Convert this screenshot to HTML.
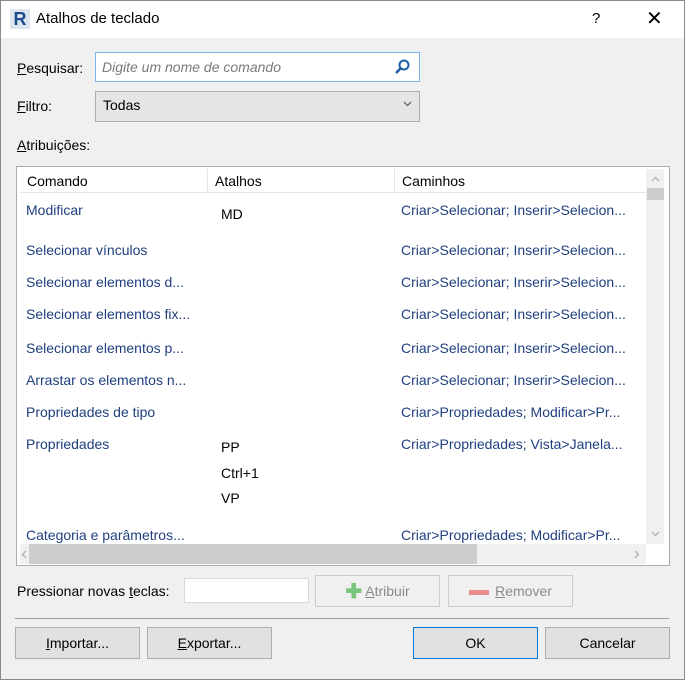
<!DOCTYPE html>
<html><head><meta charset="utf-8"><style>
*{margin:0;padding:0;box-sizing:border-box}
body{width:685px;height:680px;background:#f0f0f0;font-family:"Liberation Sans",sans-serif;font-size:14px;color:#000;position:relative;overflow:hidden}
.a{position:absolute;white-space:nowrap}
.b{color:#1f3f7f}
.btn{position:absolute;background:#e1e1e1;border:1px solid #adadad;text-align:center;line-height:30px}
u{text-decoration:underline}
</style></head><body>
<div class="a" style="left:0;top:0;width:685px;height:680px;border:1px solid #8a8a8a"></div>
<div class="a" style="left:1px;top:1px;width:683px;height:37px;background:#fff"></div>
<div class="a" style="left:10px;top:9px;width:20px;height:20px;background:#dde6ee;color:#1b4d8c;font-weight:bold;font-size:18px;line-height:20px;text-align:center">R</div>
<div class="a" style="left:36px;top:10px;font-size:15px">Atalhos de teclado</div>
<div class="a" style="left:592px;top:10px;font-size:15px">?</div>
<div class="a" style="left:646px;top:6px;font-size:20px">✕</div>

<div class="a" style="left:17px;top:60px"><u>P</u>esquisar:</div>
<div class="a" style="left:95px;top:52px;width:325px;height:30px;background:#fff;border:1px solid #7eb4ea"></div>
<div class="a" style="left:102px;top:59px;font-style:italic;color:#7a7a7a">Digite um nome de comando</div>
<svg class="a" style="left:394px;top:58px" width="18" height="18"><circle cx="10" cy="7" r="4.5" fill="none" stroke="#1a5fa8" stroke-width="2"/><line x1="7" y1="10" x2="2" y2="15" stroke="#1a5fa8" stroke-width="2.5"/></svg>

<div class="a" style="left:17px;top:98px"><u>F</u>iltro:</div>
<div class="a" style="left:95px;top:91px;width:325px;height:31px;background:#e5e5e5;border:1px solid #adadad"></div>
<div class="a" style="left:103px;top:97px">Todas</div>
<svg class="a" style="left:403px;top:101px" width="9" height="6"><polyline points="1,1 4.5,4.5 8,1" fill="none" stroke="#555" stroke-width="1.2"/></svg>

<div class="a" style="left:17px;top:137px"><u>A</u>tribuições:</div>

<div class="a" style="left:16px;top:166px;width:654px;height:400px;background:#fff;border:1px solid #adadad"></div>
<div class="a" style="left:20px;top:169px;width:626px;height:24px;border-bottom:1px solid #e5e5e5"></div>
<div class="a" style="left:207px;top:169px;width:1px;height:24px;background:#e5e5e5"></div>
<div class="a" style="left:394px;top:169px;width:1px;height:24px;background:#e5e5e5"></div>
<div class="a" style="left:27px;top:173px">Comando</div>
<div class="a" style="left:215px;top:173px">Atalhos</div>
<div class="a" style="left:402px;top:173px">Caminhos</div>
<div class="a" style="left:646px;top:169px;width:18px;height:375px;background:#f0f0f0"></div>
<div class="a" style="left:647px;top:188px;width:17px;height:12px;background:#cdcdcd"></div>
<svg class="a" style="left:651px;top:176px" width="9" height="6"><polyline points="1,5 4.5,1.5 8,5" fill="none" stroke="#aaa" stroke-width="1.2"/></svg>
<svg class="a" style="left:651px;top:531px" width="9" height="6"><polyline points="1,1 4.5,4.5 8,1" fill="none" stroke="#aaa" stroke-width="1.2"/></svg>
<div class="a" style="left:20px;top:544px;width:626px;height:20px;background:#f0f0f0"></div>
<div class="a" style="left:29px;top:544px;width:448px;height:20px;background:#cdcdcd"></div>
<svg class="a" style="left:21px;top:550px" width="6" height="9"><polyline points="5,1 1.5,4.5 5,8" fill="none" stroke="#aaa" stroke-width="1.2"/></svg>
<svg class="a" style="left:634px;top:550px" width="6" height="9"><polyline points="1,1 4.5,4.5 1,8" fill="none" stroke="#aaa" stroke-width="1.2"/></svg>

<div class="a b" style="left:26px;top:202px">Modificar</div>
<div class="a" style="left:221px;top:206px">MD</div>
<div class="a b" style="left:401px;top:202px">Criar&gt;Selecionar; Inserir&gt;Selecion...</div>
<div class="a b" style="left:26px;top:242px">Selecionar vínculos</div>
<div class="a b" style="left:401px;top:242px">Criar&gt;Selecionar; Inserir&gt;Selecion...</div>
<div class="a b" style="left:26px;top:274px">Selecionar elementos d...</div>
<div class="a b" style="left:401px;top:274px">Criar&gt;Selecionar; Inserir&gt;Selecion...</div>
<div class="a b" style="left:26px;top:306px">Selecionar elementos fix...</div>
<div class="a b" style="left:401px;top:306px">Criar&gt;Selecionar; Inserir&gt;Selecion...</div>
<div class="a b" style="left:26px;top:340px">Selecionar elementos p...</div>
<div class="a b" style="left:401px;top:340px">Criar&gt;Selecionar; Inserir&gt;Selecion...</div>
<div class="a b" style="left:26px;top:372px">Arrastar os elementos n...</div>
<div class="a b" style="left:401px;top:372px">Criar&gt;Selecionar; Inserir&gt;Selecion...</div>
<div class="a b" style="left:26px;top:404px">Propriedades de tipo</div>
<div class="a b" style="left:401px;top:404px">Criar&gt;Propriedades; Modificar&gt;Pr...</div>
<div class="a b" style="left:26px;top:436px">Propriedades</div>
<div class="a" style="left:221px;top:439px">PP</div>
<div class="a" style="left:221px;top:465px">Ctrl+1</div>
<div class="a" style="left:221px;top:490px">VP</div>
<div class="a b" style="left:401px;top:436px">Criar&gt;Propriedades; Vista&gt;Janela...</div>
<div class="a b" style="left:26px;top:527px">Categoria e parâmetros...</div>
<div class="a b" style="left:401px;top:527px">Criar&gt;Propriedades; Modificar&gt;Pr...</div>

<div class="a" style="left:17px;top:583px">Pressionar novas <u>t</u>eclas:</div>
<div class="a" style="left:184px;top:578px;width:125px;height:25px;background:#fff;border:1px solid #d9d9d9"></div>
<div class="btn" style="left:315px;top:575px;width:125px;height:32px;background:#f0f0f0;border-color:#cccccc;color:#8a8a8a;line-height:30px"><span style="color:#7bc47b;font-weight:bold;font-size:20px;vertical-align:-2px">✚</span> <u>A</u>tribuir</div>
<div class="btn" style="left:448px;top:575px;width:125px;height:32px;background:#f0f0f0;border-color:#cccccc;color:#8a8a8a"><span style="display:inline-block;width:20px;height:5px;background:#e88d8d;vertical-align:middle;margin-right:6px"></span><u>R</u>emover</div>
<div class="a" style="left:15px;top:618px;width:654px;height:1px;background:#a0a0a0"></div>
<div class="btn" style="left:15px;top:627px;width:125px;height:32px"><u>I</u>mportar...</div>
<div class="btn" style="left:147px;top:627px;width:125px;height:32px"><u>E</u>xportar...</div>
<div class="btn" style="left:413px;top:627px;width:125px;height:32px;border-color:#0078d7">OK</div>
<div class="btn" style="left:545px;top:627px;width:125px;height:32px">Cancelar</div>
</body></html>
